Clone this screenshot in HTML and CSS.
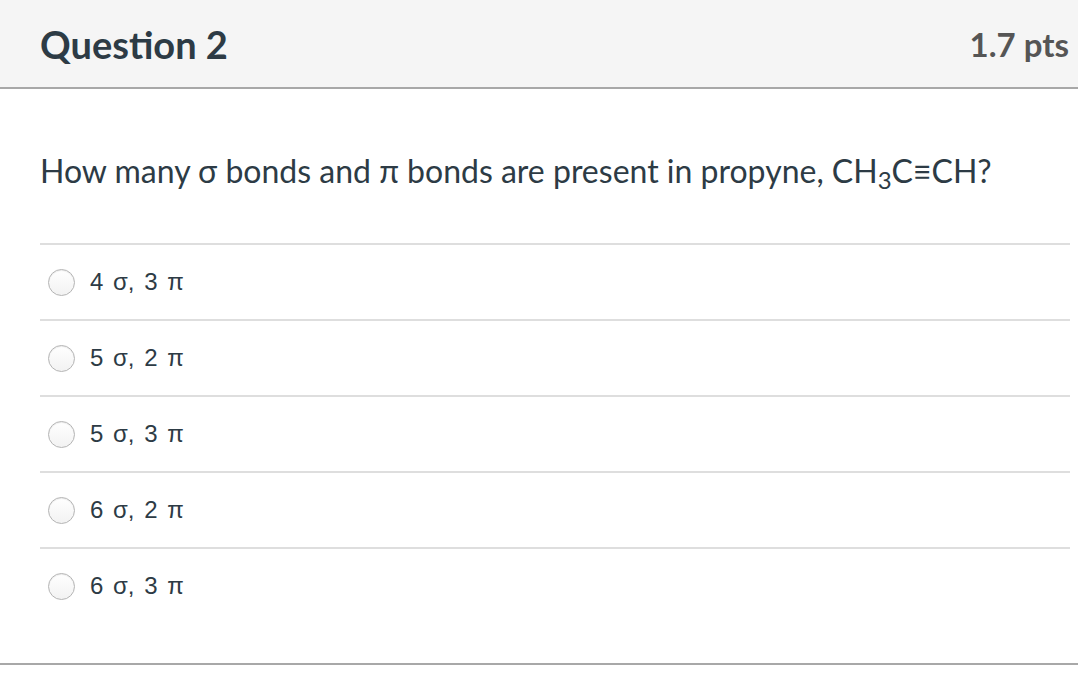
FILE: index.html
```html
<!DOCTYPE html>
<html>
<head>
<meta charset="utf-8">
<link rel="stylesheet" href="styles.css">
</head>
<body>
<div class="quiz">
  <div class="header">
    <h2 class="title">Question 2</h2>
    <div class="pts">1.7 pts</div>
  </div>
  <div class="body">
    <p class="question">How many σ bonds and π bonds are present in propyne, CH<sub>3</sub>C≡CH?</p>
    <div class="answers">
      <label class="answer"><span class="radio"></span><span class="atext">4 σ, 3 π</span></label>
      <label class="answer"><span class="radio"></span><span class="atext">5 σ, 2 π</span></label>
      <label class="answer"><span class="radio"></span><span class="atext">5 σ, 3 π</span></label>
      <label class="answer"><span class="radio"></span><span class="atext">6 σ, 2 π</span></label>
      <label class="answer"><span class="radio"></span><span class="atext">6 σ, 3 π</span></label>
    </div>
  </div>
</div>
</body>
</html>
```

FILE: styles.css
```css
html, body {
  margin: 0;
  padding: 0;
  background: #fff;
}
.quiz {
  width: 1078px;
  font-family: Lato, "Liberation Sans", sans-serif;
  color: #2d3b45;
  border-bottom: 2px solid #a8a8a8;
}
.header {
  box-sizing: border-box;
  background: #f5f5f5;
  border-bottom: 2px solid #a8a8a8;
  display: flex;
  align-items: center;
  justify-content: space-between;
  padding: 0 9px 0 40px;
  height: 89px;
}
.title {
  margin: 0;
  font-size: 38px;
  font-weight: 700;
  color: #2d3b45;
}
.pts {
  font-size: 33px;
  font-weight: 700;
  color: #555;
}
.body {
  padding: 0 8px 0 40px;
}
.question {
  margin: 0;
  padding: 60px 0 50px;
  font-size: 32px;
  line-height: 44px;
}
.question sub {
  font-size: 0.75em;
  vertical-align: -0.25em;
  line-height: 0;
}
.answers {
  display: flex;
  flex-direction: column;
  padding-bottom: 40px;
}
.answer {
  display: flex;
  align-items: center;
  gap: 15px;
  height: 76px;
  box-sizing: border-box;
  border-top: 2px solid #dedede;
  padding-left: 8px;
}
.radio {
  width: 25px;
  height: 25px;
  border-radius: 50%;
  border: 1px solid #b4b4b4;
  background: linear-gradient(#fff, #f2f2f2);
  box-shadow: inset 0 1px 1px rgba(0,0,0,0.08);
  flex: none;
}
.atext {
  font-family: "Liberation Sans", Arial, sans-serif;
  font-size: 24px;
  word-spacing: 3px;
  color: #2d3b45;
}
```
